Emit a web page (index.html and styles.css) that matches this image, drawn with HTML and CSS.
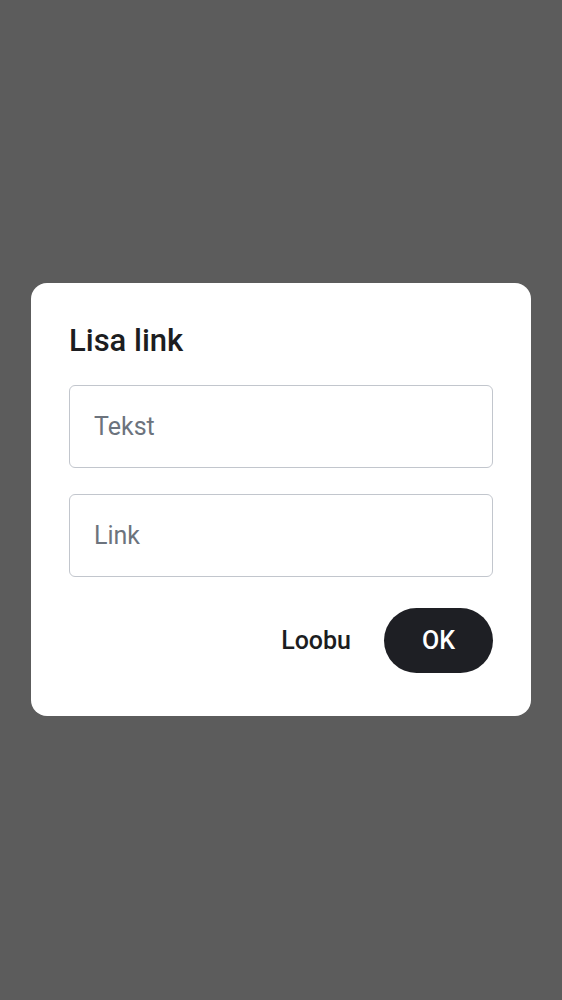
FILE: index.html
```html
<!DOCTYPE html>
<html lang="et">
<head>
<meta charset="utf-8">
<link rel="stylesheet" href="styles.css">
</head>
<body>
<div class="overlay">
  <div class="dialog">
    <h2 class="title">Lisa link</h2>
    <div class="field"><input class="input" type="text" placeholder="Tekst"></div>
    <div class="field"><input class="input" type="text" placeholder="Link"></div>
    <div class="actions">
      <button class="btn btn-text">Loobu</button>
      <button class="btn btn-primary">OK</button>
    </div>
  </div>
</div>
</body>
</html>
```
FILE: styles.css
```css
* { box-sizing: border-box; }
html, body { margin: 0; padding: 0; height: 100%; }
body {
  background: #5c5c5c;
  font-family: Roboto, "Noto Sans", sans-serif;
}
.overlay {
  height: 999px;
  display: flex;
  align-items: center;
  justify-content: center;
}
.dialog {
  width: 500px;
  background: #ffffff;
  border-radius: 16px;
  padding: 38px 38px 43px 38px;
  display: flex;
  flex-direction: column;
}
.title {
  margin: 0 0 24px 0;
  font-size: 31px;
  font-weight: 500;
  line-height: 40px;
  color: #1c1d21;
}
.field { margin-bottom: 26px; }
.field:nth-of-type(2) { margin-bottom: 31px; }
.input {
  display: block;
  width: 100%;
  height: 83px;
  border: 1.5px solid #c2c6cd;
  border-radius: 6px;
  padding: 0 24px;
  font-family: Roboto, "Noto Sans", sans-serif;
  font-size: 25px;
  color: #1c1d21;
  outline: none;
  background: #fff;
}
.input::placeholder { color: #6c737d; }
.actions {
  display: flex;
  justify-content: flex-end;
  align-items: center;
  gap: 10px;
}
.btn {
  font-family: Roboto, "Noto Sans", sans-serif;
  font-size: 25px;
  font-weight: 500;
  border: none;
  height: 65px;
  border-radius: 33px;
  cursor: pointer;
}
.btn-text {
  background: transparent;
  color: #1c1d21;
  padding: 0 23px;
}
.btn-primary {
  background: #1e1f24;
  color: #ffffff;
  width: 109px;
}
```
